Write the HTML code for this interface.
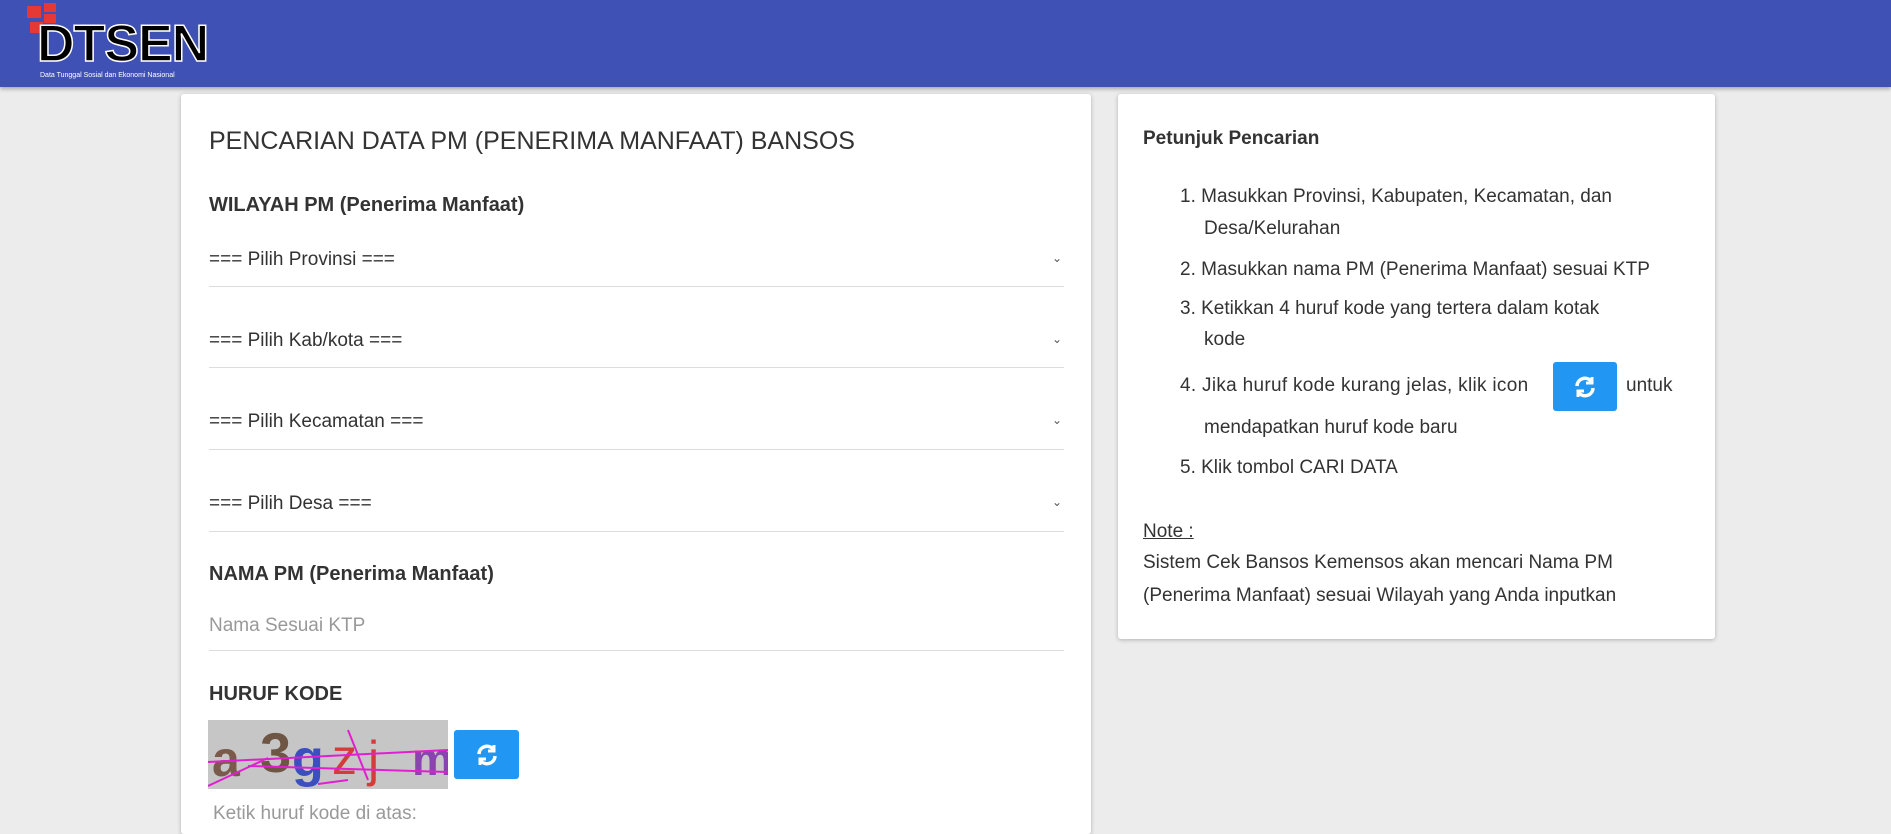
<!DOCTYPE html>
<html><head><meta charset="utf-8"><style>
body{margin:0;width:1891px;height:822px;background:#ececec;font-family:"Liberation Sans",sans-serif;color:#333;position:relative;overflow:hidden}
.hdr{position:absolute;left:0;top:0;width:1891px;height:87px;background:#3f51b5;box-shadow:0 2px 4px rgba(0,0,0,.3)}
.card{position:absolute;background:#fff;box-shadow:0 1px 4px rgba(0,0,0,.25);border-radius:3px}
.a{position:absolute;white-space:nowrap}
.sel{position:absolute;left:209px;width:855px;border-bottom:1px solid #ddd;height:0}
.chev{position:absolute;left:1052px;font-size:12px;color:#555}
.btn{position:absolute;background:#2196f3;border-radius:3px;display:flex;align-items:center;justify-content:center}
.r{font-size:19px;color:#333}
</style></head><body>
<div class="hdr">
 <div class="a" style="left:27px;top:6px;width:14px;height:12px;background:#e53935"></div>
 <div class="a" style="left:44px;top:3px;width:12px;height:9px;background:#e53935"></div>
 <div class="a" style="left:44px;top:14px;width:12px;height:9px;background:#e53935"></div>
 <div class="a" style="left:30px;top:22px;width:13px;height:11px;background:#e53935"></div>
 <div class="a" style="left:37px;top:16px;font:bold 52px 'Liberation Sans',sans-serif;color:#000;-webkit-text-stroke:1.5px #fff;letter-spacing:-1px;line-height:56px">DTSEN</div>
 <div class="a" style="left:40px;top:72px;font-size:7px;color:#fff">Data Tunggal Sosial dan Ekonomi Nasional</div>
</div>
<div class="card" style="left:181px;top:94px;width:910px;height:740px">
</div>
<div class="a" style="left:209px;top:127px;font-size:25px;color:#333">PENCARIAN DATA PM (PENERIMA MANFAAT) BANSOS</div>
<div class="a" style="left:209px;top:194px;font-size:20px;font-weight:bold">WILAYAH PM (Penerima Manfaat)</div>
<div class="a r" style="left:209px;top:249px">=== Pilih Provinsi ===</div><div class="chev a" style="top:251px">&#8964;</div><div class="sel" style="top:286px"></div>
<div class="a r" style="left:209px;top:330px">=== Pilih Kab/kota ===</div><div class="chev a" style="top:332px">&#8964;</div><div class="sel" style="top:367px"></div>
<div class="a r" style="left:209px;top:411px">=== Pilih Kecamatan ===</div><div class="chev a" style="top:413px">&#8964;</div><div class="sel" style="top:449px"></div>
<div class="a r" style="left:209px;top:493px">=== Pilih Desa ===</div><div class="chev a" style="top:495px">&#8964;</div><div class="sel" style="top:531px"></div>
<div class="a" style="left:209px;top:563px;font-size:20px;font-weight:bold">NAMA PM (Penerima Manfaat)</div>
<div class="a" style="left:209px;top:615px;font-size:19px;color:#999">Nama Sesuai KTP</div><div class="sel" style="top:650px"></div>
<div class="a" style="left:209px;top:683px;font-size:20px;font-weight:bold">HURUF KODE</div>
<div class="a" style="left:208px;top:720px;width:240px;height:69px;background:#c6c6c6;overflow:hidden">
 <svg width="240" height="69"><text x="4" y="56" font-size="50" fill="#7a5a4a" font-weight="bold" font-family="Liberation Sans">a</text><text x="52" y="52" font-size="56" fill="#6e5544" font-weight="bold" font-family="Liberation Sans">3</text><text x="84" y="56" font-size="52" fill="#3b4fbf" font-weight="bold" font-family="Liberation Sans">g</text><text x="124" y="54" font-size="50" fill="#d43c3c" font-family="Liberation Sans">z</text><text x="160" y="56" font-size="50" fill="#d43c3c" font-family="Liberation Sans">j</text><text x="204" y="55" font-size="46" fill="#8a44b0" font-weight="bold" font-family="Liberation Sans">m</text>
 <g stroke="#e020d0" stroke-width="2"><line x1="0" y1="42" x2="240" y2="30"/><line x1="40" y1="46" x2="240" y2="52"/><line x1="0" y1="66" x2="60" y2="38"/><line x1="140" y1="10" x2="160" y2="60"/><line x1="110" y1="64" x2="140" y2="60"/></g></svg>
</div>
<div class="btn" style="left:454px;top:730px;width:65px;height:49px"><svg width="24" height="24" viewBox="0 0 24 24" fill="none" stroke="#fff" stroke-width="3.5"><path d="M4 11a8 8 0 0 1 14-5"/><path d="M20 13a8 8 0 0 1-14 5"/><path d="M19 2v6h-6" stroke-width="3"/><path d="M5 22v-6h6" stroke-width="3"/></svg></div>
<div class="a" style="left:213px;top:803px;font-size:19px;color:#999">Ketik huruf kode di atas:</div>

<div class="card" style="left:1118px;top:94px;width:597px;height:545px"></div>
<div class="a" style="left:1143px;top:128px;font-size:19px;font-weight:bold;color:#333">Petunjuk Pencarian</div>
<div class="a r" style="left:1180px;top:186px">1. Masukkan Provinsi, Kabupaten, Kecamatan, dan</div>
<div class="a r" style="left:1204px;top:218px">Desa/Kelurahan</div>
<div class="a r" style="left:1180px;top:259px">2. Masukkan nama PM (Penerima Manfaat) sesuai KTP</div>
<div class="a r" style="left:1180px;top:298px">3. Ketikkan 4 huruf kode yang tertera dalam kotak</div>
<div class="a r" style="left:1204px;top:329px">kode</div>
<div class="a r" style="left:1180px;top:375px;letter-spacing:0.3px">4. Jika huruf kode kurang jelas, klik icon</div>
<div class="btn" style="left:1553px;top:362px;width:64px;height:49px"><svg width="24" height="24" viewBox="0 0 24 24" fill="none" stroke="#fff" stroke-width="3.5"><path d="M4 11a8 8 0 0 1 14-5"/><path d="M20 13a8 8 0 0 1-14 5"/><path d="M19 2v6h-6" stroke-width="3"/><path d="M5 22v-6h6" stroke-width="3"/></svg></div>
<div class="a r" style="left:1626px;top:375px">untuk</div>
<div class="a r" style="left:1204px;top:417px">mendapatkan huruf kode baru</div>
<div class="a r" style="left:1180px;top:457px">5. Klik tombol CARI DATA</div>
<div class="a r" style="left:1143px;top:521px;text-decoration:underline">Note :</div>
<div class="a r" style="left:1143px;top:552px">Sistem Cek Bansos Kemensos akan mencari Nama PM</div>
<div class="a r" style="left:1143px;top:585px">(Penerima Manfaat) sesuai Wilayah yang Anda inputkan</div>
</body></html>
